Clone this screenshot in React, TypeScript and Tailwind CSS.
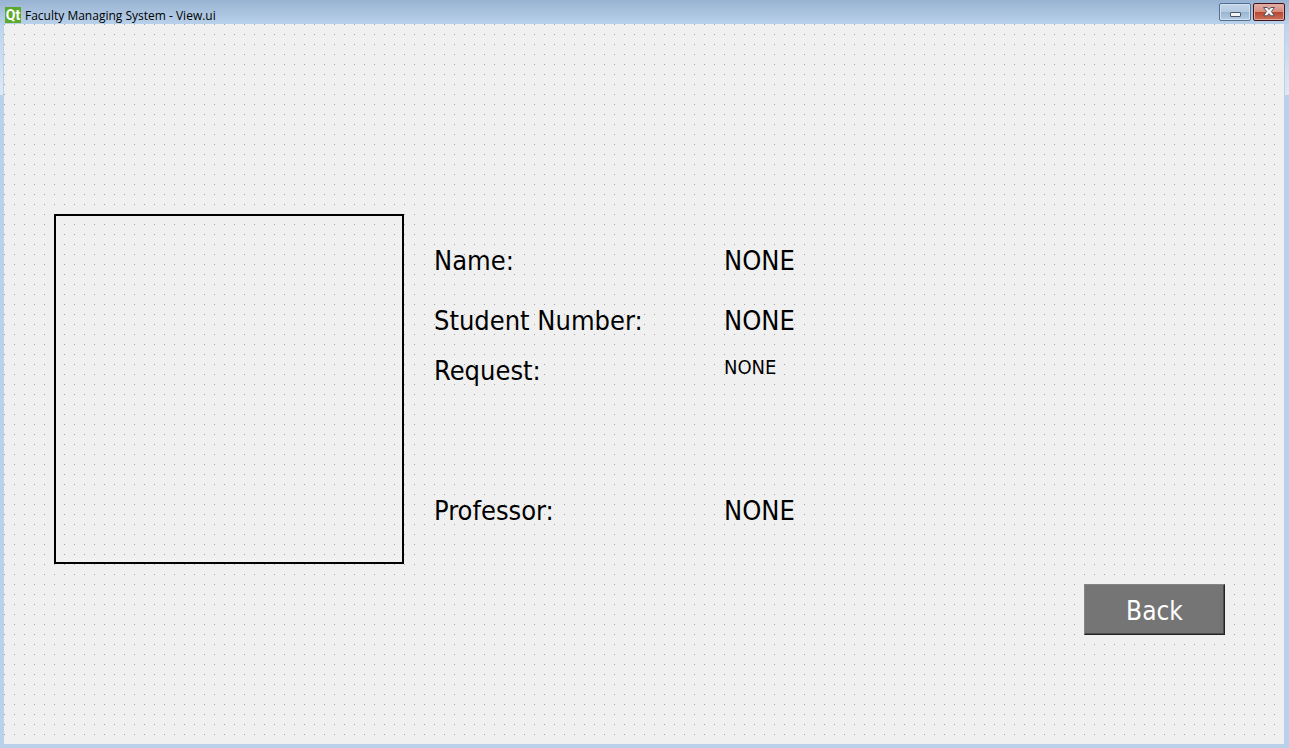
import React from "react";

type Field = { label: string; value: string; row: string; valueClass: string };

const fields: Field[] = [
  { label: "Name:", value: "NONE", row: "mb-7", valueClass: "text-[27px]" },
  { label: "Student Number:", value: "NONE", row: "mb-[18px]", valueClass: "text-[27px]" },
  { label: "Request:", value: "NONE", row: "mb-[108px]", valueClass: "-mt-2 text-xl" },
  { label: "Professor:", value: "NONE", row: "", valueClass: "text-[27px]" },
];

function TitleBar() {
  return (
    <header className="flex h-6 items-start justify-between bg-linear-to-b from-[#98b3d2] to-[#b9d1ea] px-1">
      <div className="flex items-end gap-1 pt-[7px]">
        <span
          aria-hidden="true"
          className="ml-px flex h-4 w-4 items-center justify-center bg-[#5caa2b] font-['Roboto',sans-serif] text-sm leading-4 font-bold text-white"
        >
          Qt
        </span>
        <h1 className="font-['Open_Sans','Noto_Sans',sans-serif] text-xs leading-[14px] whitespace-nowrap text-black">
          Faculty Managing System - View.ui
        </h1>
      </div>
      <div className="flex gap-0.5 pt-[3px]">
        <button
          type="button"
          aria-label="Minimize"
          className="flex h-[18px] w-8 items-center justify-center rounded-xs border border-[#536f91] bg-[linear-gradient(#c3d5e8,#b4cae1_50%,#98b4d1_50%,#b5cce4)] shadow-[inset_0_0_0_1px_#d3e1ef]"
        >
          <svg width="11" height="5" viewBox="0 0 11 5" className="mt-1">
            <rect x="0.5" y="0.5" width="10" height="4" rx="0.5" fill="#f4f4f4" stroke="#4c5565" />
          </svg>
        </button>
        <button
          type="button"
          aria-label="Close"
          className="flex h-[18px] w-8 items-center justify-center rounded-xs border border-[#43141c] bg-[linear-gradient(#e5b0a7,#d58c7d_50%,#b8452e_50%,#cc705a)] shadow-[inset_0_0_0_1px_#e2a99f]"
        >
          <svg width="12" height="10" viewBox="0 0 12 10">
            <path
              d="M0.5 0.5H4.2L6 2.5L7.8 0.5H11.5L8.4 4.5L11.5 8.8H7.8L6 6.7L4.2 8.8H0.5L3.6 4.5Z"
              fill="#f7f7f7"
              stroke="#515361"
            />
          </svg>
        </button>
      </div>
    </header>
  );
}

export default function App() {
  return (
    <div className="flex min-h-screen flex-col bg-[#b9d1ea] font-['DejaVu_Sans_Condensed','DejaVu_Sans',sans-serif] text-black">
      <TitleBar />
      <div className="flex grow pb-1">
        <div className="w-1 shrink-0 pr-px">
          <div className="h-[71px] bg-linear-to-b from-[#bdd3eb] to-[#dfe9f5]" />
        </div>
        <main className="flex grow flex-col bg-[#f0f0f0] bg-[radial-gradient(circle_at_0.5px_0.5px,#a0a0a0_0.7px,transparent_0.7px)] bg-size-[10px_10px] pt-[190px] pr-[59px] pl-[50px]">
          <div className="flex gap-[30px]">
            <div role="img" aria-label="Student photo" className="h-[350px] w-[350px] shrink-0 border-2 border-black" />
            <dl className="pt-[31px]">
              {fields.map((f) => (
                <div key={f.label} className={`flex h-8 items-center whitespace-nowrap ${f.row}`}>
                  <dt className="w-[290px] text-[27px] leading-8">{f.label}</dt>
                  <dd className={`leading-8 ${f.valueClass}`}>{f.value}</dd>
                </div>
              ))}
            </dl>
          </div>
          <button
            type="button"
            className="mt-5 h-[51px] w-[141px] self-end border border-t-[#858585] border-r-[#242424] border-b-[#242424] border-l-[#858585] bg-[#757575] pt-0.5 text-[26px] leading-8 text-white shadow-[inset_-1px_-1px_0_#4c4c4c]"
          >
            Back
          </button>
        </main>
        <div className="w-[5px] shrink-0 pl-px">
          <div className="h-[71px] bg-linear-to-b from-[#bdd3eb] to-[#dfe9f5]" />
        </div>
      </div>
    </div>
  );
}
